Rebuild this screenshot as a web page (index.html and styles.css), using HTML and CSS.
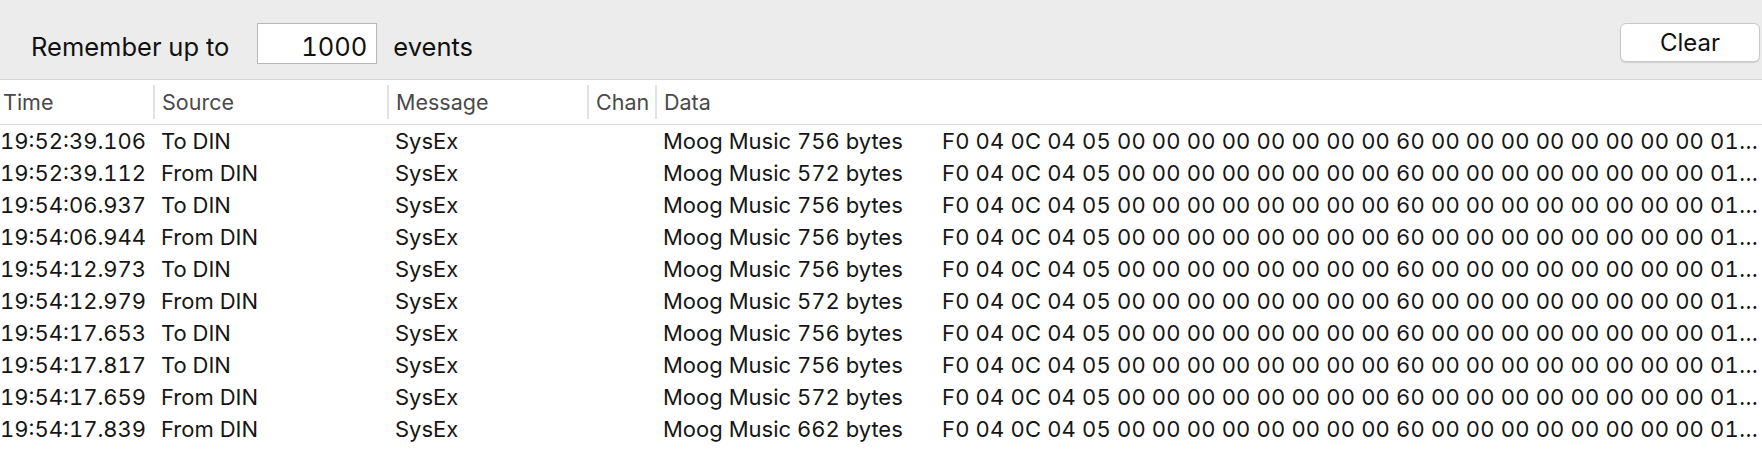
FILE: index.html
```html
<!DOCTYPE html>
<html>
<head>
<meta charset="utf-8">
<link rel="stylesheet" href="styles.css">
</head>
<body>
<div class="toolbar">
  <span class="label">Remember up to</span>
  <div class="count">1000</div>
  <span class="label events">events</span>
  <div class="spacer"></div>
  <button class="clear">Clear</button>
</div>
<div class="table">
  <div class="row head">
    <div class="cell c-time">Time</div>
    <div class="cell div">Source</div>
    <div class="cell div">Message</div>
    <div class="cell div">Chan</div>
    <div class="cell div">Data</div>
  </div>
  <div class="row"><div class="cell c-time">19:52:39.106</div><div class="cell">To DIN</div><div class="cell">SysEx</div><div class="cell"></div><div class="cell data"><span class="desc">Moog Music 756 bytes</span><span class="hex">F0 04 0C 04 05 00 00 00 00 00 00 00 00 60 00 00 00 00 00 00 00 00 01…</span></div></div>
  <div class="row"><div class="cell c-time">19:52:39.112</div><div class="cell">From DIN</div><div class="cell">SysEx</div><div class="cell"></div><div class="cell data"><span class="desc">Moog Music 572 bytes</span><span class="hex">F0 04 0C 04 05 00 00 00 00 00 00 00 00 60 00 00 00 00 00 00 00 00 01…</span></div></div>
  <div class="row"><div class="cell c-time">19:54:06.937</div><div class="cell">To DIN</div><div class="cell">SysEx</div><div class="cell"></div><div class="cell data"><span class="desc">Moog Music 756 bytes</span><span class="hex">F0 04 0C 04 05 00 00 00 00 00 00 00 00 60 00 00 00 00 00 00 00 00 01…</span></div></div>
  <div class="row"><div class="cell c-time">19:54:06.944</div><div class="cell">From DIN</div><div class="cell">SysEx</div><div class="cell"></div><div class="cell data"><span class="desc">Moog Music 756 bytes</span><span class="hex">F0 04 0C 04 05 00 00 00 00 00 00 00 00 60 00 00 00 00 00 00 00 00 01…</span></div></div>
  <div class="row"><div class="cell c-time">19:54:12.973</div><div class="cell">To DIN</div><div class="cell">SysEx</div><div class="cell"></div><div class="cell data"><span class="desc">Moog Music 756 bytes</span><span class="hex">F0 04 0C 04 05 00 00 00 00 00 00 00 00 60 00 00 00 00 00 00 00 00 01…</span></div></div>
  <div class="row"><div class="cell c-time">19:54:12.979</div><div class="cell">From DIN</div><div class="cell">SysEx</div><div class="cell"></div><div class="cell data"><span class="desc">Moog Music 572 bytes</span><span class="hex">F0 04 0C 04 05 00 00 00 00 00 00 00 00 60 00 00 00 00 00 00 00 00 01…</span></div></div>
  <div class="row"><div class="cell c-time">19:54:17.653</div><div class="cell">To DIN</div><div class="cell">SysEx</div><div class="cell"></div><div class="cell data"><span class="desc">Moog Music 756 bytes</span><span class="hex">F0 04 0C 04 05 00 00 00 00 00 00 00 00 60 00 00 00 00 00 00 00 00 01…</span></div></div>
  <div class="row"><div class="cell c-time">19:54:17.817</div><div class="cell">To DIN</div><div class="cell">SysEx</div><div class="cell"></div><div class="cell data"><span class="desc">Moog Music 756 bytes</span><span class="hex">F0 04 0C 04 05 00 00 00 00 00 00 00 00 60 00 00 00 00 00 00 00 00 01…</span></div></div>
  <div class="row"><div class="cell c-time">19:54:17.659</div><div class="cell">From DIN</div><div class="cell">SysEx</div><div class="cell"></div><div class="cell data"><span class="desc">Moog Music 572 bytes</span><span class="hex">F0 04 0C 04 05 00 00 00 00 00 00 00 00 60 00 00 00 00 00 00 00 00 01…</span></div></div>
  <div class="row"><div class="cell c-time">19:54:17.839</div><div class="cell">From DIN</div><div class="cell">SysEx</div><div class="cell"></div><div class="cell data"><span class="desc">Moog Music 662 bytes</span><span class="hex">F0 04 0C 04 05 00 00 00 00 00 00 00 00 60 00 00 00 00 00 00 00 00 01…</span></div></div>
</div>
</body>
</html>
```
FILE: styles.css
```css
html, body {
  margin: 0;
  padding: 0;
  background: #ffffff;
  font-family: "Inter", "Liberation Sans", sans-serif;
  font-variant-numeric: tabular-nums;
  color: #161616;
}

.toolbar {
  height: 80px;
  box-sizing: border-box;
  background: #ececec;
  border-bottom: 1px solid #d6d6d6;
  display: flex;
  align-items: flex-start;
  padding: 0 2px 0 31px;
  font-size: 25.5px;
}

.toolbar .label {
  color: #111;
  line-height: 31px;
  margin-top: 31px;
}

.count {
  width: 120px;
  height: 41px;
  box-sizing: border-box;
  margin-left: 28px;
  margin-top: 23px;
  background: #fff;
  border: 1px solid #b8b8b8;
  text-align: right;
  padding: 7px 9px 0 0;
  line-height: 31px;
  color: #111;
}

.events {
  margin-left: 16px;
}

.spacer {
  flex: 1;
}

.clear {
  width: 140px;
  height: 39px;
  margin-top: 23px;
  background: #fff;
  border: 1px solid #c9c9c9;
  border-radius: 6px;
  box-shadow: 0 1px 1px rgba(0, 0, 0, 0.12);
  font-family: inherit;
  font-size: 24px;
  color: #111;
  padding: 0;
}

.table {
  font-size: 22px;
}

.row {
  display: grid;
  grid-template-columns: 153px 234px 200px 68px 1fr;
  height: 32px;
  align-items: center;
}

.row .cell {
  padding-left: 8px;
  white-space: nowrap;
  overflow: hidden;
}

.row .c-time {
  padding-left: 0;
}

.head {
  height: 44px;
  border-bottom: 1px solid #d9d9d9;
  color: #4a4a4a;
  font-size: 21.5px;
}

.head .cell {
  height: 34px;
  line-height: 34px;
  padding-left: 7px;
}

.head .c-time {
  padding-left: 3px;
}

.head .div {
  border-left: 2px solid #e2e2e2;
}

.data {
  display: flex;
}

.desc {
  width: 279px;
  flex: none;
}

.hex {
  flex: 1;
  overflow: hidden;
  white-space: nowrap;
  letter-spacing: 0.15px;
}
```
